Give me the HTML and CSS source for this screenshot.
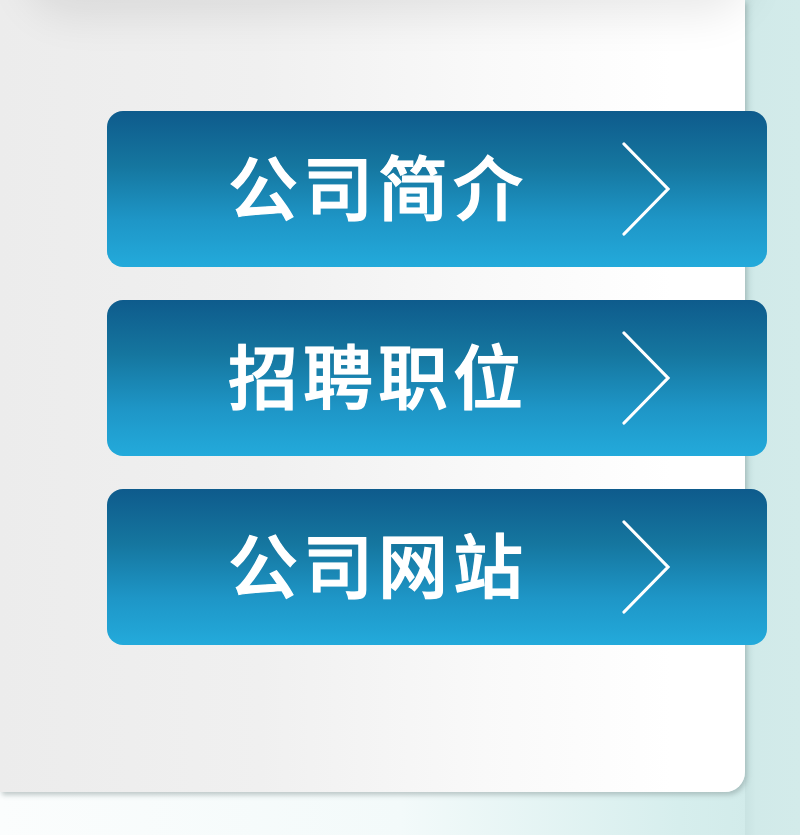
FILE: index.html
```html
<!DOCTYPE html>
<html lang="zh">
<head>
<meta charset="utf-8">
<link rel="stylesheet" href="styles.css">
</head>
<body>
<div class="page">
  <div class="panel">
    <div class="top-shade"></div>
    <nav class="menu">
      <a class="btn" href="#"><span class="label">公司简介</span><svg class="chev" width="50" height="96" viewBox="0 0 50 96"><polyline points="2,2 46,47 2,92" fill="none" stroke="#fff" stroke-width="3.2" stroke-linecap="round" stroke-linejoin="miter"/></svg></a>
      <a class="btn" href="#"><span class="label">招聘职位</span><svg class="chev" width="50" height="96" viewBox="0 0 50 96"><polyline points="2,2 46,47 2,92" fill="none" stroke="#fff" stroke-width="3.2" stroke-linecap="round" stroke-linejoin="miter"/></svg></a>
      <a class="btn" href="#"><span class="label">公司网站</span><svg class="chev" width="50" height="96" viewBox="0 0 50 96"><polyline points="2,2 46,47 2,92" fill="none" stroke="#fff" stroke-width="3.2" stroke-linecap="round" stroke-linejoin="miter"/></svg></a>
    </nav>
  </div>
</div>
</body>
</html>
```
FILE: styles.css
```css
html, body {
  margin: 0;
  padding: 0;
}
body {
  width: 800px;
  height: 835px;
  overflow: hidden;
  background: linear-gradient(90deg, #fbfdfd 0%, #f3fafa 50%, #d6eeed 85%, #cfe9e8 100%);
  font-family: "Noto Sans CJK SC", "Noto Sans", sans-serif;
}
.page {
  position: relative;
  width: 800px;
  height: 835px;
}
.page::before {
  content: "";
  position: absolute;
  left: 745px;
  top: 0;
  width: 55px;
  height: 835px;
  background: linear-gradient(90deg, #c9e3e2 0%, #d1eae9 20%, #d3ebea 100%);
}
.panel {
  position: relative;
  width: 745px;
  height: 792px;
  box-sizing: border-box;
  padding: 111px 0 0 107px;
  background: linear-gradient(90deg, #ececec 0%, #f0f0f0 35%, #f9f9f9 65%, #ffffff 90%, #ffffff 100%);
  border-bottom-right-radius: 20px;
  box-shadow: 2px 3px 5px rgba(120, 140, 140, 0.45);
  z-index: 1;
  overflow: visible;
}
.top-shade {
  position: absolute;
  left: 40px;
  right: 10px;
  top: -60px;
  height: 60px;
  border-radius: 30px;
  box-shadow: 0 0 45px 14px rgba(0, 0, 0, 0.09);
}
.menu {
  display: flex;
  flex-direction: column;
  gap: 33px;
  width: 660px;
  position: relative;
}
.btn {
  display: flex;
  align-items: center;
  height: 156px;
  box-sizing: border-box;
  padding: 0 95px 0 121px;
  border-radius: 16px;
  background: linear-gradient(180deg, #0e5b8c 0%, #15769f 35%, #1e96c7 70%, #23aadb 100%);
  text-decoration: none;
  color: #fff;
}
.label {
  font-size: 70px;
  font-weight: 500;
  line-height: 1;
  letter-spacing: 5px;
  color: #fff;
  margin-top: -8px;
  -webkit-text-stroke: 1.2px #fff;
  text-shadow: 0 0 1px rgba(255,255,255,0.7);
}
.chev {
  margin-left: auto;
  margin-top: 2px;
  display: block;
}
```
